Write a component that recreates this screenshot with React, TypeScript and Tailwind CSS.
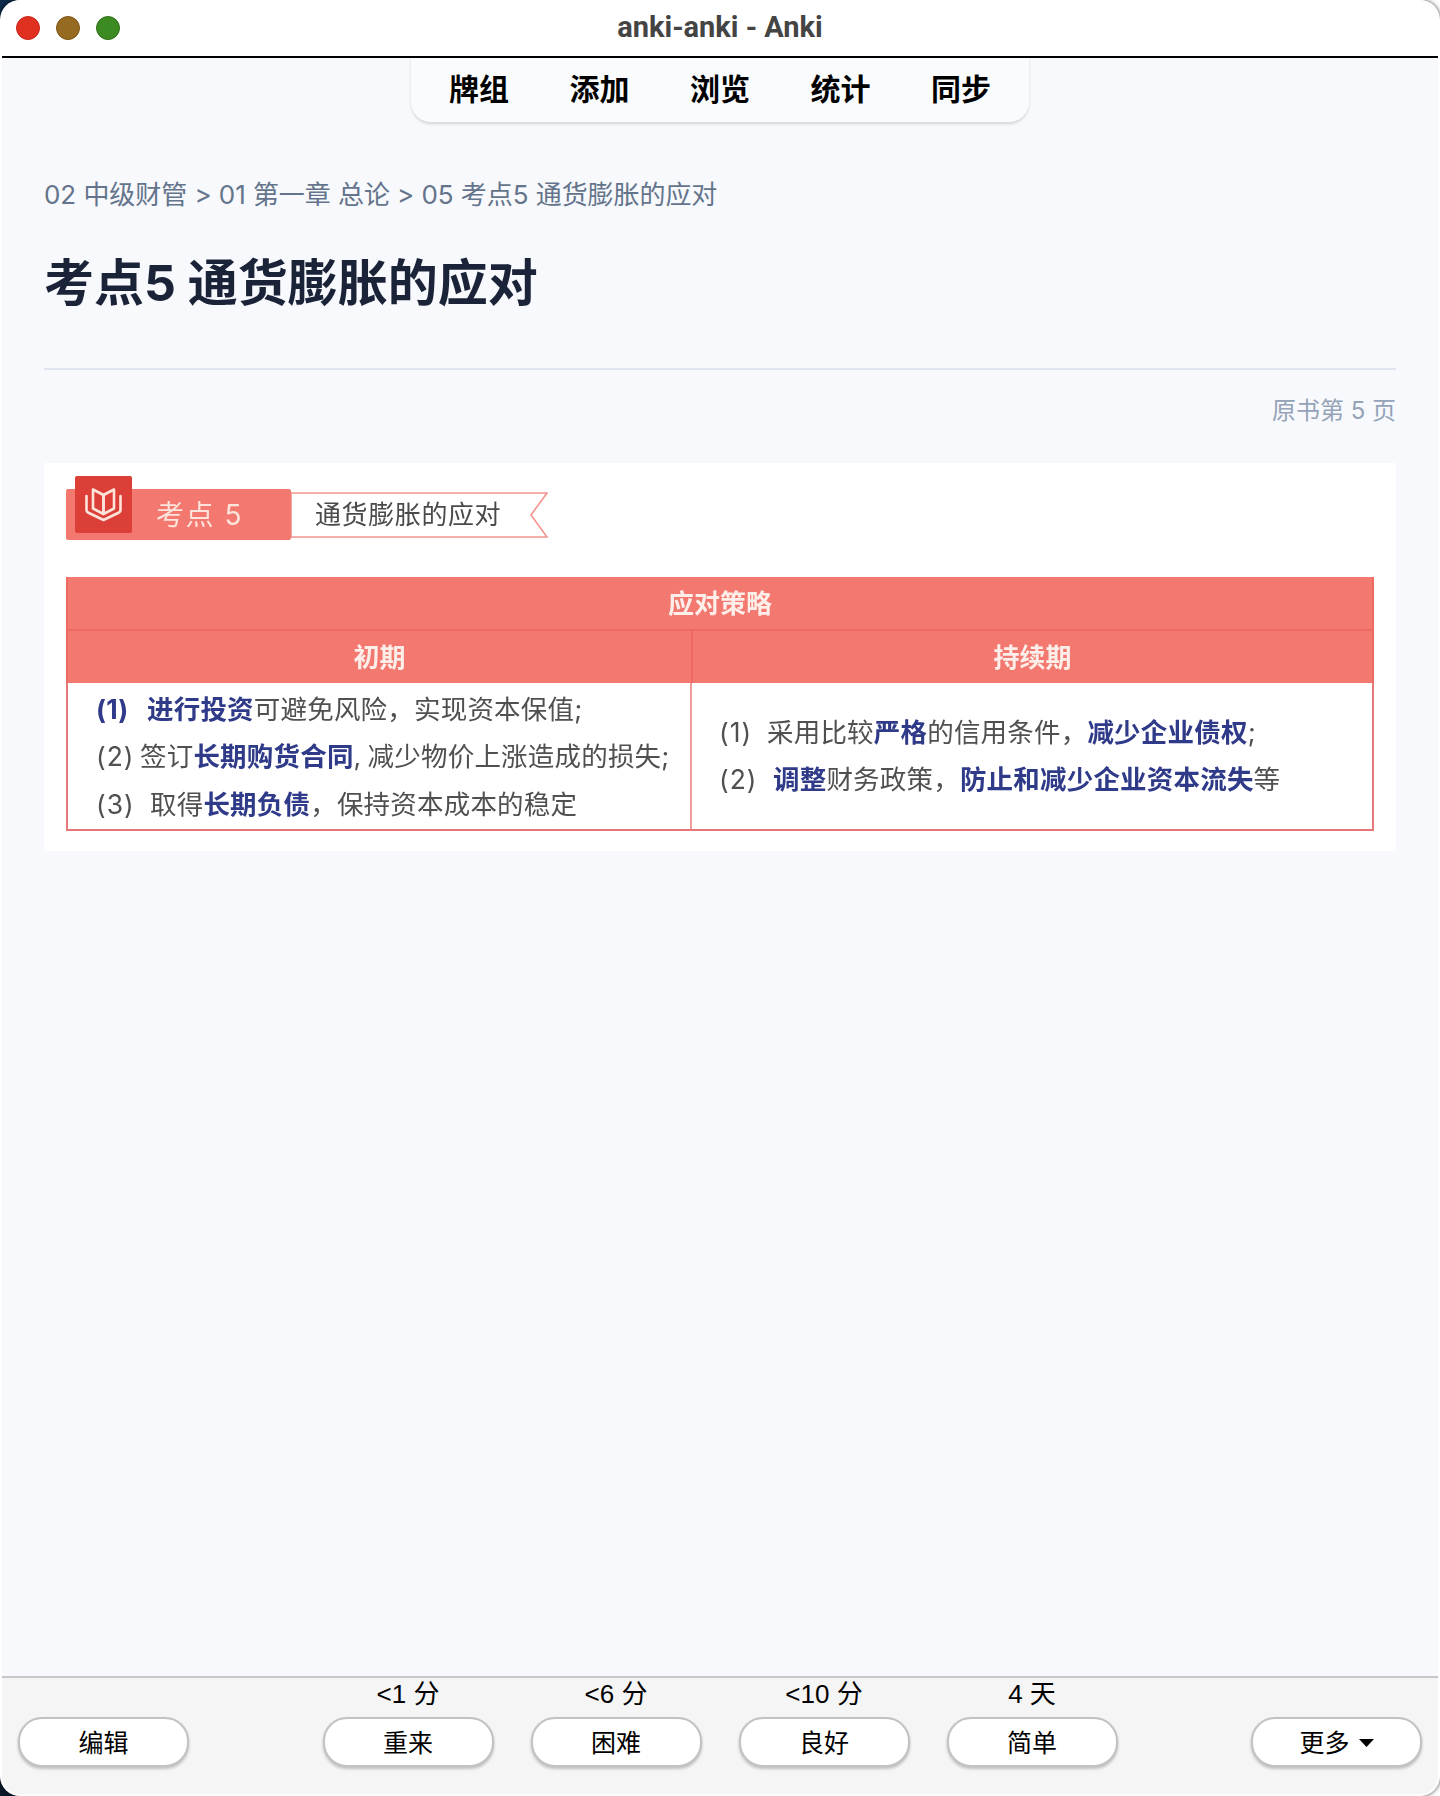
import React from 'react';

const navItems = ['牌组', '添加', '浏览', '统计', '同步'];

const answers = [
  { label: '<1 分', text: '重来' },
  { label: '<6 分', text: '困难' },
  { label: '<10 分', text: '良好' },
  { label: '4 天', text: '简单' },
];

const Strong: React.FC<{ children: React.ReactNode }> = ({ children }) => (
  <span className="font-bold text-[#2f3a88]">{children}</span>
);

const ReviewButton: React.FC<{ children: React.ReactNode }> = ({ children }) => (
  <button className="flex h-[50px] w-[171px] items-center justify-center rounded-[24px] border-2 border-[#c2c2c2] bg-white pt-[2px] text-[25px] leading-none text-black shadow-[0_2px_3px_rgba(0,0,0,0.22)]">
    {children}
  </button>
);

const BookIcon = () => (
  <svg width="37" height="35" viewBox="0 0 37 35" fill="none" stroke="#fde3da" strokeWidth="2.6" strokeLinejoin="round" strokeLinecap="round">
    <path d="M1.5 9V23Q1.5 25 4 26L18.5 33L33 26Q35.5 25 35.5 23V9" />
    <path d="M8 2.5L18.5 8V27L8 21.5Z" />
    <path d="M29 2.5L18.5 8V27L29 21.5Z" />
  </svg>
);

const Figure = () => (
  <div className="mt-[34px] bg-white px-[22px] pb-[20px] pt-[26px] blur-[0.5px]">
    <div className="flex items-center">
      <div className="relative flex h-[51px] w-[225px] items-center rounded-[2px] bg-[#f27870] pl-[90px] text-[28px] tracking-[1.5px] text-[#fde3da]">
        <div className="absolute left-[9px] top-[-13px] flex h-[57px] w-[57px] items-center justify-center rounded-[2px] bg-[#dc3f37]">
          <BookIcon />
        </div>
        考点 5
      </div>
      <div className="relative flex h-[46px] w-[257px] items-center pl-[24px] text-[26px] tracking-[0.6px] text-[#4a4a4a]">
        <svg className="absolute inset-0" width="257" height="46" viewBox="0 0 257 46" fill="none">
          <polygon points="0,1 256,1 240,23 256,45 0,45" stroke="#f4948e" strokeWidth="1.6" />
        </svg>
        <span className="relative">通货膨胀的应对</span>
      </div>
    </div>

    <div className="mt-[37px] border-2 border-t-0 border-[#e8777a]">
      <div className="-mx-[2px] flex h-[54px] items-center justify-center border-x-2 border-b-2 border-[#ec6a64] bg-[#f27870] pt-[1px] text-[26px] font-bold text-[#fdeee9]">
        应对策略
      </div>
      <div className="-mx-[2px] grid h-[52px] grid-cols-[625px_1fr] border-x-2 border-[#ec6a64] bg-[#f27870] text-[26px] font-bold text-[#fdeee9]">
        <div className="flex items-center justify-center border-r-2 border-[#ec6a64]">初期</div>
        <div className="flex items-center justify-center">持续期</div>
      </div>
      <div className="grid h-[146px] grid-cols-[624px_1fr] text-[26.5px] leading-[47.5px] tracking-[0.2px] text-[#505050]">
        <div className="flex flex-col justify-center border-r-2 border-[#f09a9a] pl-[28px] pt-[2px] whitespace-nowrap">
          <div>
            <Strong><span className="inline-block w-[51px]">(1)</span>进行投资</Strong>可避免风险，实现资本保值;
          </div>
          <div>
            <span className="inline-block w-[44px] tracking-[1px]">(2)</span>签订<Strong>长期购货合同</Strong><span className="inline-block w-[14px]">,</span>减少物价上涨造成的损失;
          </div>
          <div>
            <span className="inline-block w-[54px] tracking-[1px]">(3)</span>取得<Strong>长期负债</Strong>，保持资本成本的稳定
          </div>
        </div>
        <div className="flex flex-col justify-center pl-[27px] whitespace-nowrap">
          <div>
            <span className="inline-block w-[48px] tracking-[1px]">(1)</span>采用比较<Strong>严格</Strong>的信用条件，<Strong>减少企业债权</Strong>;
          </div>
          <div>
            <span className="inline-block w-[54px] tracking-[1px]">(2)</span><Strong>调整</Strong>财务政策，<Strong>防止和减少企业资本流失</Strong>等
          </div>
        </div>
      </div>
    </div>
  </div>
);

export default function App() {
  return (
    <div className="relative h-[1796px] w-[1440px] overflow-hidden bg-white font-['Inter','Noto_Sans_CJK_SC',sans-serif]">
      {/* desktop showing through the window's rounded corners */}
      <div className="absolute left-0 top-0 h-[20px] w-[20px] bg-[#0c2a4a]" />
      <div className="absolute bottom-0 left-0 h-[20px] w-[20px] bg-[#0a1a2a]" />

      <div className="relative flex h-full flex-col overflow-hidden rounded-[20px] border-x-2 border-b-2 border-white bg-white shadow-[0_0_4px_rgba(0,0,0,0.75)]">
        <div className="grid h-[56px] shrink-0 grid-cols-[1fr_auto_1fr] items-center bg-white">
          <div className="flex gap-[16px] pl-[14px]">
            <span className="h-[24px] w-[24px] rounded-full border border-[#c9281a] bg-[#e0301f]" />
            <span className="h-[24px] w-[24px] rounded-full border border-[#7f5716] bg-[#966a20]" />
            <span className="h-[24px] w-[24px] rounded-full border border-[#2f6f1a] bg-[#3c8a22]" />
          </div>
          <div className="font-['Roboto',sans-serif] text-[29px] font-bold text-[#444444]">anki-anki - Anki</div>
          <div />
        </div>
        <div className="h-[2px] shrink-0 bg-black" />

        <div className="flex min-h-0 flex-1 flex-col bg-[#f7f9fc]">
          <div className="flex justify-center">
            <nav className="flex h-[64px] w-[618px] items-center justify-between rounded-b-[20px] bg-[#fafbfd] px-[38px] pb-[2px] shadow-[0_2px_3px_rgba(0,0,0,0.14)]">
              {navItems.map((item) => (
                <span key={item} className="text-[30px] font-bold leading-none text-black">
                  {item}
                </span>
              ))}
            </nav>
          </div>

          <div className="px-[42px]">
            <div className="mt-[55px] text-[26px] leading-[36px] tracking-[-0.06px] text-[#64748b]">02 中级财管 &gt; 01 第一章 总论 &gt; 05 考点5 通货膨胀的应对</div>
            <h1 className="mt-[38px] text-[50px] font-bold leading-[64px] text-[#1a2338]">考点5 通货膨胀的应对</h1>
            <div className="mt-[53px] h-[2px] bg-[#dde5f0]" />
            <div className="mt-[23px] text-right text-[24px] leading-[36px] text-[#94a3b8]">原书第 5 页</div>
            <Figure />
          </div>
        </div>

        <div className="h-[2px] shrink-0 bg-[#c8c8c8]" />
        <div className="grid h-[116px] shrink-0 grid-cols-[1fr_auto_1fr] bg-[#f5f5f5] px-[16px]">
          <div className="pt-[39px]">
            <ReviewButton>编辑</ReviewButton>
          </div>
          <div className="flex gap-[37px]">
            {answers.map((answer) => (
              <div key={answer.text} className="flex flex-col items-center">
                <div className="h-[39px] font-['Liberation_Sans','Noto_Sans_CJK_SC',sans-serif] text-[26px] leading-[33px] text-black">{answer.label}</div>
                <ReviewButton>{answer.text}</ReviewButton>
              </div>
            ))}
          </div>
          <div className="flex justify-end pt-[39px]">
            <ReviewButton>
              更多
              <svg className="ml-[9px]" width="15" height="8" viewBox="0 0 15 8">
                <polygon points="0,0 15,0 7.5,8" fill="#000" />
              </svg>
            </ReviewButton>
          </div>
        </div>
      </div>
    </div>
  );
}
